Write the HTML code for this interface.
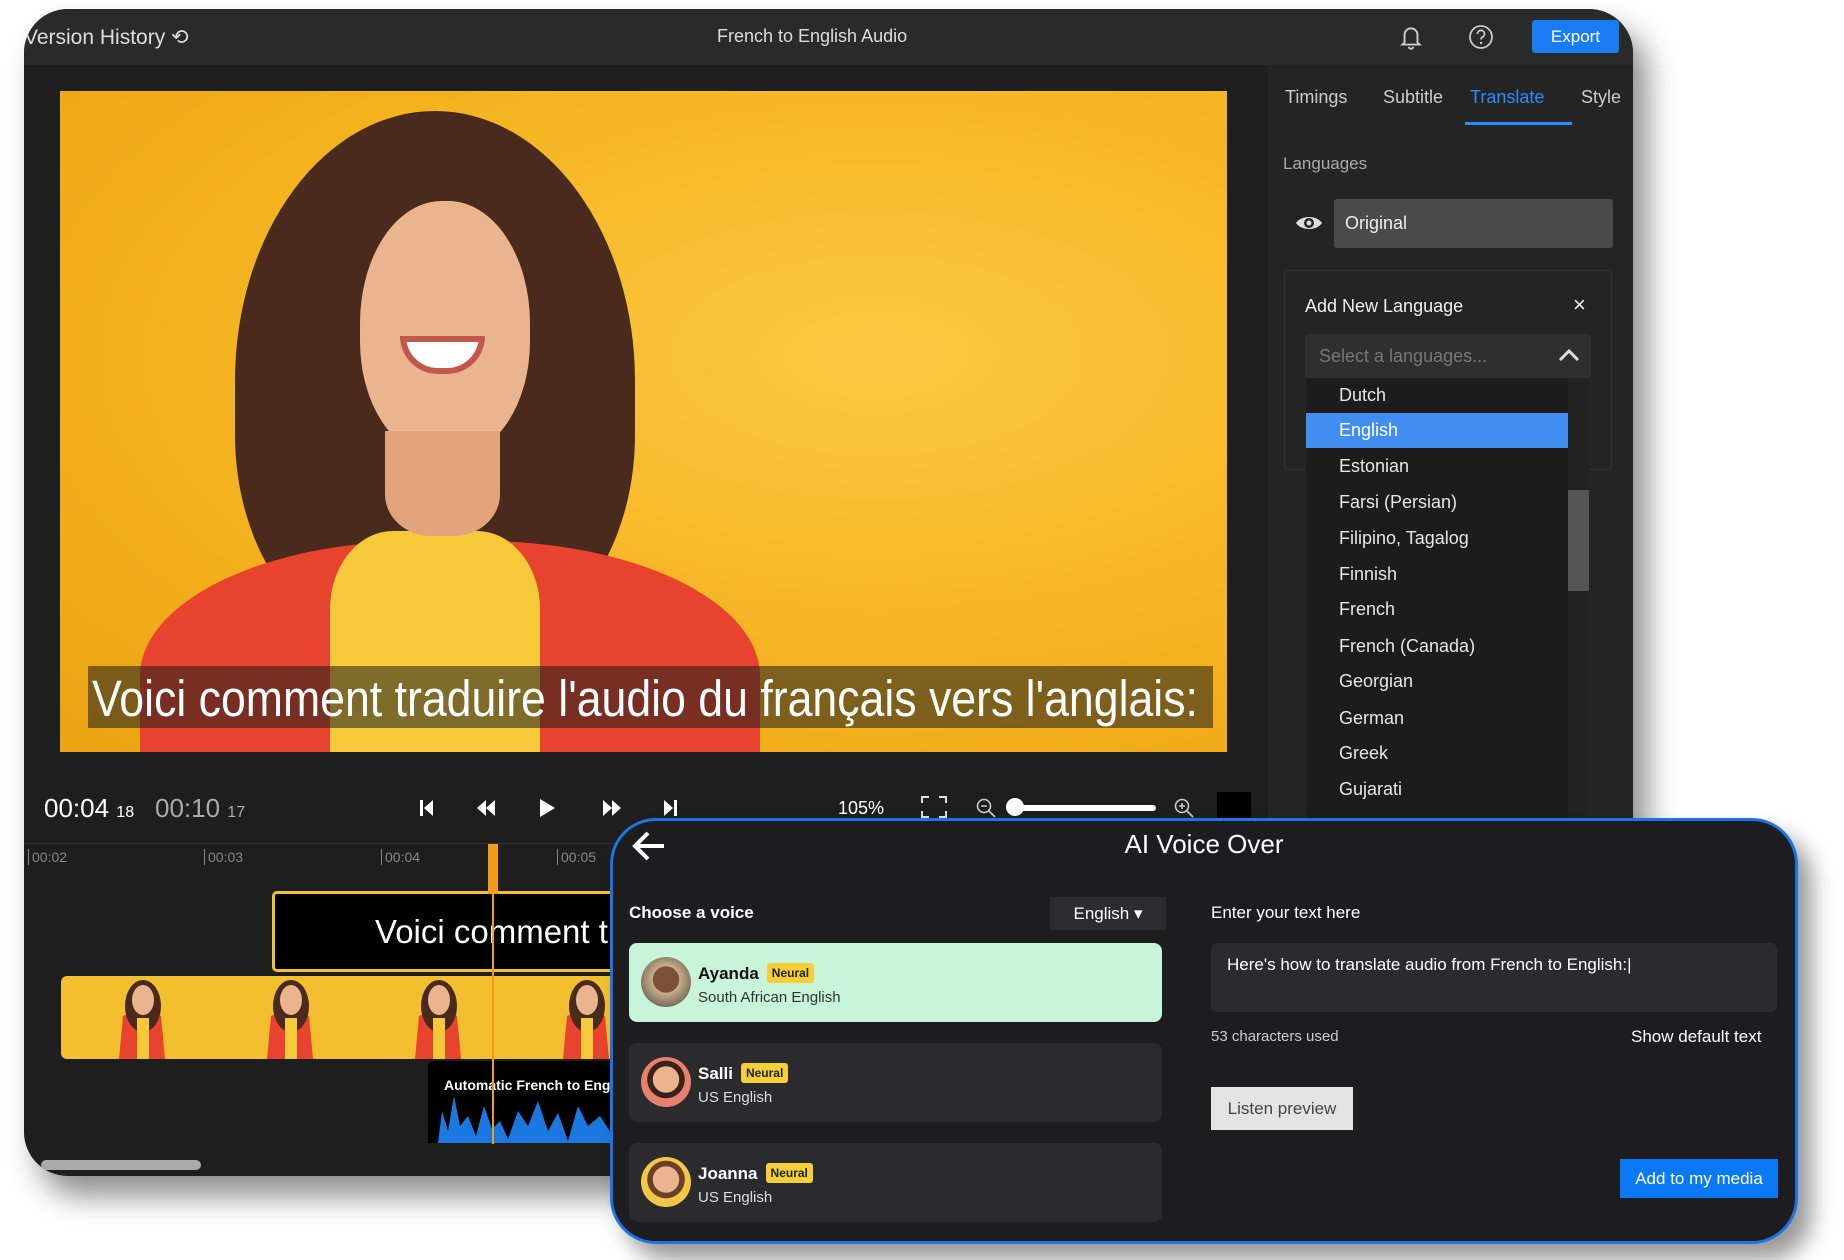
<!DOCTYPE html>
<html><head><meta charset="utf-8"><style>
*{box-sizing:border-box;margin:0;padding:0}
body{width:1844px;height:1260px;background:#fff;position:relative;overflow:hidden;font-family:"Liberation Sans",sans-serif;color:#ddd}
.a{position:absolute}
.win{left:24px;top:9px;width:1609px;height:1167px;background:#1e1e1e;border-radius:44px 44px 20px 44px;overflow:hidden;box-shadow:14px 20px 30px rgba(0,0,0,.45)}
.top{left:0;top:0;width:1609px;height:56px;background:#2a2a2a}
.lang div{position:absolute;left:33px;font-size:18px;color:#e6e6e6}
.card{position:absolute;left:16px;width:533px;height:79px;border-radius:8px;background:#2b2b2d}
.av{position:absolute;left:12px;top:14px;width:50px;height:50px;border-radius:50%}
.nm{position:absolute;left:69px;top:20px;font-size:17px;font-weight:bold;color:#fff}
.nb{display:inline-block;background:#f5cf3a;color:#222;font-size:12px;font-weight:bold;padding:3px 5px;border-radius:3px;margin-left:8px;vertical-align:2px}
.sb{position:absolute;left:69px;top:46px;font-size:15px;color:#ddd}
</style></head><body>
<div class="a win">
  <div class="a top">
    <div class="a" style="left:0;top:16px;font-size:21px;color:#ddd">Version History ⟲</div>
    <div class="a" style="left:693px;top:17px;font-size:18px;color:#ddd">French to English Audio</div>
    <svg class="a" style="left:1374px;top:14px" width="26" height="28" viewBox="0 0 24 26"><path d="M6 18V11a6 6 0 0 1 12 0v7l2 2H4z M10 22a2 2 0 0 0 4 0" fill="none" stroke="#ccc" stroke-width="1.8"/></svg>
    <svg class="a" style="left:1443px;top:14px" width="28" height="28" viewBox="0 0 28 28"><circle cx="14" cy="14" r="11" fill="none" stroke="#ccc" stroke-width="1.8"/><path d="M10.5 11a3.5 3.5 0 1 1 5 3c-1 .6-1.5 1.2-1.5 2.5" fill="none" stroke="#ccc" stroke-width="1.8"/><circle cx="14" cy="20" r="1.2" fill="#ccc"/></svg>
    <div class="a" style="left:1508px;top:11px;width:87px;height:33px;background:#1a7cf5;color:#fff;font-size:17px;text-align:center;line-height:33px;border-radius:3px">Export</div>
  </div>
  <!-- video -->
  <div class="a" style="left:36px;top:82px;width:1167px;height:661px;overflow:hidden;background:radial-gradient(ellipse at 70% 40%,#fcc840,#f4b21e 60%,#eaa312)">
    <div class="a" style="left:175px;top:20px;width:400px;height:540px;border-radius:50% 50% 40% 40%;background:#4a2a1c"></div>
    <div class="a" style="left:80px;top:450px;width:620px;height:300px;border-radius:45% 45% 0 0;background:#e8432e"></div>
    <div class="a" style="left:270px;top:440px;width:210px;height:260px;border-radius:30% 30% 0 0;background:#f5c93a"></div>
    <div class="a" style="left:300px;top:110px;width:170px;height:255px;border-radius:48% 48% 45% 45%;background:#e9b48e"></div>
    <div class="a" style="left:325px;top:340px;width:115px;height:105px;background:#e2a47c;border-radius:0 0 40% 40%"></div>
    <div class="a" style="left:340px;top:245px;width:85px;height:38px;border-radius:0 0 42px 42px;background:#fff;border:6px solid #c4574c"></div>
    <div class="a" style="left:28px;top:575px;width:1125px;height:62px;background:rgba(30,30,30,.55)"></div>
    <div class="a" style="left:32px;top:578px;font-size:51px;color:#fff;white-space:nowrap;transform:scaleX(0.875);transform-origin:0 0">Voici comment traduire l'audio du français vers l'anglais:</div>
  </div>
  <!-- right panel -->
  <div class="a" style="left:1244px;top:56px;width:365px;height:1111px;background:#242424"></div>
  <div class="a" style="left:1261px;top:78px;font-size:18px;color:#ccc">Timings</div>
  <div class="a" style="left:1359px;top:78px;font-size:18px;color:#ccc">Subtitle</div>
  <div class="a" style="left:1446px;top:78px;font-size:18px;color:#2a8cff">Translate</div>
  <div class="a" style="left:1441px;top:113px;width:107px;height:3px;background:#2a8cff"></div>
  <div class="a" style="left:1557px;top:78px;font-size:18px;color:#ccc">Style</div>
  <div class="a" style="left:1259px;top:145px;font-size:17px;color:#aaa">Languages</div>
  <svg class="a" style="left:1270px;top:203px" width="30" height="22" viewBox="0 0 30 22"><path d="M2 11C7 3 23 3 28 11C23 19 7 19 2 11z" fill="#ddd"/><circle cx="15" cy="11" r="5" fill="#242424"/><circle cx="15" cy="11" r="2.5" fill="#ddd"/></svg>
  <div class="a" style="left:1310px;top:190px;width:279px;height:49px;background:#4a4a4a;border-radius:3px;font-size:18px;color:#eee;line-height:49px;padding-left:11px">Original</div>
  <div class="a" style="left:1260px;top:261px;width:328px;height:200px;border:1px solid #333;border-radius:4px"></div>
  <div class="a" style="left:1281px;top:287px;font-size:18px;color:#eee">Add New Language</div>
  <div class="a" style="left:1549px;top:283px;font-size:22px;color:#eee">×</div>
  <div class="a" style="left:1281px;top:325px;width:286px;height:44px;background:#2f2f2f;border-radius:3px;font-size:18px;color:#777;line-height:44px;padding-left:14px">Select a languages...</div>
  <svg class="a" style="left:1533px;top:338px" width="24" height="16"><path d="M3 13L12 4L21 13" fill="none" stroke="#ddd" stroke-width="3"/></svg>
  <div class="a lang" style="left:1282px;top:369px;width:283px;height:450px;background:#1c1c1c">
    <div style="top:7px">Dutch</div>
    <div style="top:35px;left:0;width:262px;height:35px;background:#3f8ef0;color:#fff;line-height:35px;padding-left:33px">English</div>
    <div style="top:78px">Estonian</div>
    <div style="top:114px">Farsi (Persian)</div>
    <div style="top:150px">Filipino, Tagalog</div>
    <div style="top:186px">Finnish</div>
    <div style="top:221px">French</div>
    <div style="top:258px">French (Canada)</div>
    <div style="top:293px">Georgian</div>
    <div style="top:330px">German</div>
    <div style="top:365px">Greek</div>
    <div style="top:401px">Gujarati</div>
    <div style="left:262px;top:0;width:21px;height:450px;background:#222"></div>
    <div style="left:262px;top:112px;width:21px;height:101px;background:#555"></div>
  </div>
  <!-- controls -->
  <div class="a" style="left:20px;top:784px;font-size:26px;color:#fff">00:04 <span style="font-size:16px">18</span></div>
  <div class="a" style="left:131px;top:784px;font-size:26px;color:#aaa">00:10 <span style="font-size:16px">17</span></div>
  <svg class="a" style="left:393px;top:787px" width="300" height="24" viewBox="0 0 300 24">
    <path d="M3 4h3v16H3z M7 12L16 4v16z" fill="#fff"/>
    <path d="M60 12l9-8v16z M69 12l9-8v16z" fill="#fff"/>
    <path d="M123 3l15 9-15 9z" fill="#fff"/>
    <path d="M186 4l9 8-9 8z M195 4l9 8-9 8z" fill="#fff"/>
    <path d="M247 4l9 8-9 8z M257 4h3v16h-3z" fill="#fff"/>
  </svg>
  <div class="a" style="left:814px;top:789px;font-size:18px;color:#fff">105%</div>
  <svg class="a" style="left:896px;top:786px" width="28" height="24"><path d="M2 8V2h7 M19 2h7v6 M26 16v6h-7 M9 22H2v-6" fill="none" stroke="#ddd" stroke-width="2"/></svg>
  <svg class="a" style="left:951px;top:788px" width="22" height="22"><circle cx="9" cy="9" r="6.5" fill="none" stroke="#ccc" stroke-width="1.6"/><path d="M6 9h6 M14 14l6 6" stroke="#ccc" stroke-width="1.6"/></svg>
  <div class="a" style="left:991px;top:796px;width:141px;height:6px;background:#fff;border-radius:3px"></div>
  <div class="a" style="left:982px;top:789px;width:18px;height:18px;background:#fff;border-radius:50%"></div>
  <svg class="a" style="left:1149px;top:788px" width="22" height="22"><circle cx="9" cy="9" r="6.5" fill="none" stroke="#ccc" stroke-width="1.6"/><path d="M6 9h6 M9 6v6 M14 14l6 6" stroke="#ccc" stroke-width="1.6"/></svg>
  <div class="a" style="left:1193px;top:783px;width:34px;height:30px;background:#000"></div>
  <!-- timeline -->
  <div class="a" style="left:0;top:834px;width:1244px;height:1px;background:#333"></div>
  <div class="a" style="left:4px;top:840px;font-size:14px;color:#888;border-left:1px solid #888;padding-left:3px">00:02</div>
  <div class="a" style="left:180px;top:840px;font-size:14px;color:#888;border-left:1px solid #888;padding-left:3px">00:03</div>
  <div class="a" style="left:357px;top:840px;font-size:14px;color:#888;border-left:1px solid #888;padding-left:3px">00:04</div>
  <div class="a" style="left:533px;top:840px;font-size:14px;color:#888;border-left:1px solid #888;padding-left:3px">00:05</div>
  <div class="a" style="left:248px;top:882px;width:360px;height:81px;background:#000;border:3px solid #f1c232;border-radius:5px;font-size:33px;color:#fff;line-height:75px;padding-left:100px;white-space:nowrap;overflow:hidden">Voici comment traduire</div>
  <div class="a" style="left:37px;top:967px;width:580px;height:83px;background:#f4bf2f;border-radius:6px;overflow:hidden">
    <svg width="580" height="83"><g id="p"><path d="M58 83L62 40Q80 30 100 40L104 83z" fill="#e8432e"/><ellipse cx="82" cy="30" rx="18" ry="26" fill="#4a2a1c"/><ellipse cx="82" cy="24" rx="11" ry="15" fill="#e9b48e"/><rect x="76" y="42" width="12" height="41" fill="#f5c93a"/></g><use href="#p" x="148"/><use href="#p" x="296"/><use href="#p" x="444"/></svg>
  </div>
  <div class="a" style="left:404px;top:1052px;width:210px;height:82px;background:#000;border-radius:6px 0 0 0;overflow:hidden">
    <div class="a" style="left:16px;top:16px;font-size:14px;font-weight:bold;color:#fff;white-space:nowrap">Automatic French to English</div>
    <svg class="a" style="left:0;top:30px" width="210" height="52"><path d="M10 52L14 20L20 40L26 5L32 35L40 25L48 45L56 15L64 38L72 30L80 48L90 20L100 35L110 10L120 40L130 22L140 50L150 15L160 35L172 25L185 45L200 18L210 30V52z" fill="#1a78e0"/></svg>
  </div>
  <div class="a" style="left:464px;top:835px;width:10px;height:50px;background:#f39c1b"></div>
  <div class="a" style="left:468px;top:835px;width:2px;height:300px;background:#f39c1b"></div>
  <div class="a" style="left:17px;top:1151px;width:160px;height:10px;background:#aaa;border-radius:5px"></div>
</div>
<!-- AI Voice Over -->
<div class="a" style="left:610px;top:818px;width:1188px;height:426px;background:#1d1d1f;border:3px solid #1a73e8;border-radius:46px;box-shadow:14px 16px 22px rgba(0,0,0,.4)">
  <svg class="a" style="left:18px;top:8px" width="36" height="34"><path d="M33 17H5 M17 4L4 17L17 30" fill="none" stroke="#fff" stroke-width="4"/></svg>
  <div class="a" style="left:0;width:1182px;top:8px;text-align:center;font-size:26px;color:#fff">AI Voice Over</div>
  <div class="a" style="left:16px;top:82px;font-size:17px;font-weight:bold;color:#fff">Choose a voice</div>
  <div class="a" style="left:437px;top:76px;width:116px;height:33px;background:#2c2c2e;font-size:17px;color:#fff;line-height:33px;text-align:center">English ▾</div>
  <div class="card" style="top:122px;background:#c8f4da">
    <div class="av" style="background:radial-gradient(circle at 50% 45%,#7a5038 35%,#c9b08a 36%,#3d3d3d)"></div>
    <div class="nm" style="color:#111">Ayanda<span class="nb">Neural</span></div><div class="sb" style="color:#333">South African English</div>
  </div>
  <div class="card" style="top:222px">
    <div class="av" style="background:radial-gradient(circle at 50% 45%,#e9b48e 35%,#3a2218 36%,#3a2218 50%,#e88070 51%)"></div>
    <div class="nm">Salli<span class="nb">Neural</span></div><div class="sb">US English</div>
  </div>
  <div class="card" style="top:322px">
    <div class="av" style="background:radial-gradient(circle at 50% 45%,#e9b48e 35%,#6a4028 36%,#6a4028 50%,#f3c746 51%)"></div>
    <div class="nm">Joanna<span class="nb">Neural</span></div><div class="sb">US English</div>
  </div>
  <div class="a" style="left:598px;top:82px;font-size:17px;color:#fff">Enter your text here</div>
  <div class="a" style="left:598px;top:122px;width:566px;height:69px;background:#2b2b2d;border-radius:6px;font-size:17px;color:#fff;padding:12px 16px">Here's how to translate audio from French to English:|</div>
  <div class="a" style="left:598px;top:207px;font-size:15px;color:#ccc">53 characters used</div>
  <div class="a" style="left:1018px;top:206px;font-size:17px;color:#fff">Show default text</div>
  <div class="a" style="left:598px;top:266px;width:142px;height:43px;background:#e4e4e4;color:#444;font-size:17px;line-height:43px;text-align:center">Listen preview</div>
  <div class="a" style="left:1007px;top:338px;width:158px;height:39px;background:#0a79f5;color:#fff;font-size:17px;line-height:39px;text-align:center">Add to my media</div>
</div>
</body></html>
